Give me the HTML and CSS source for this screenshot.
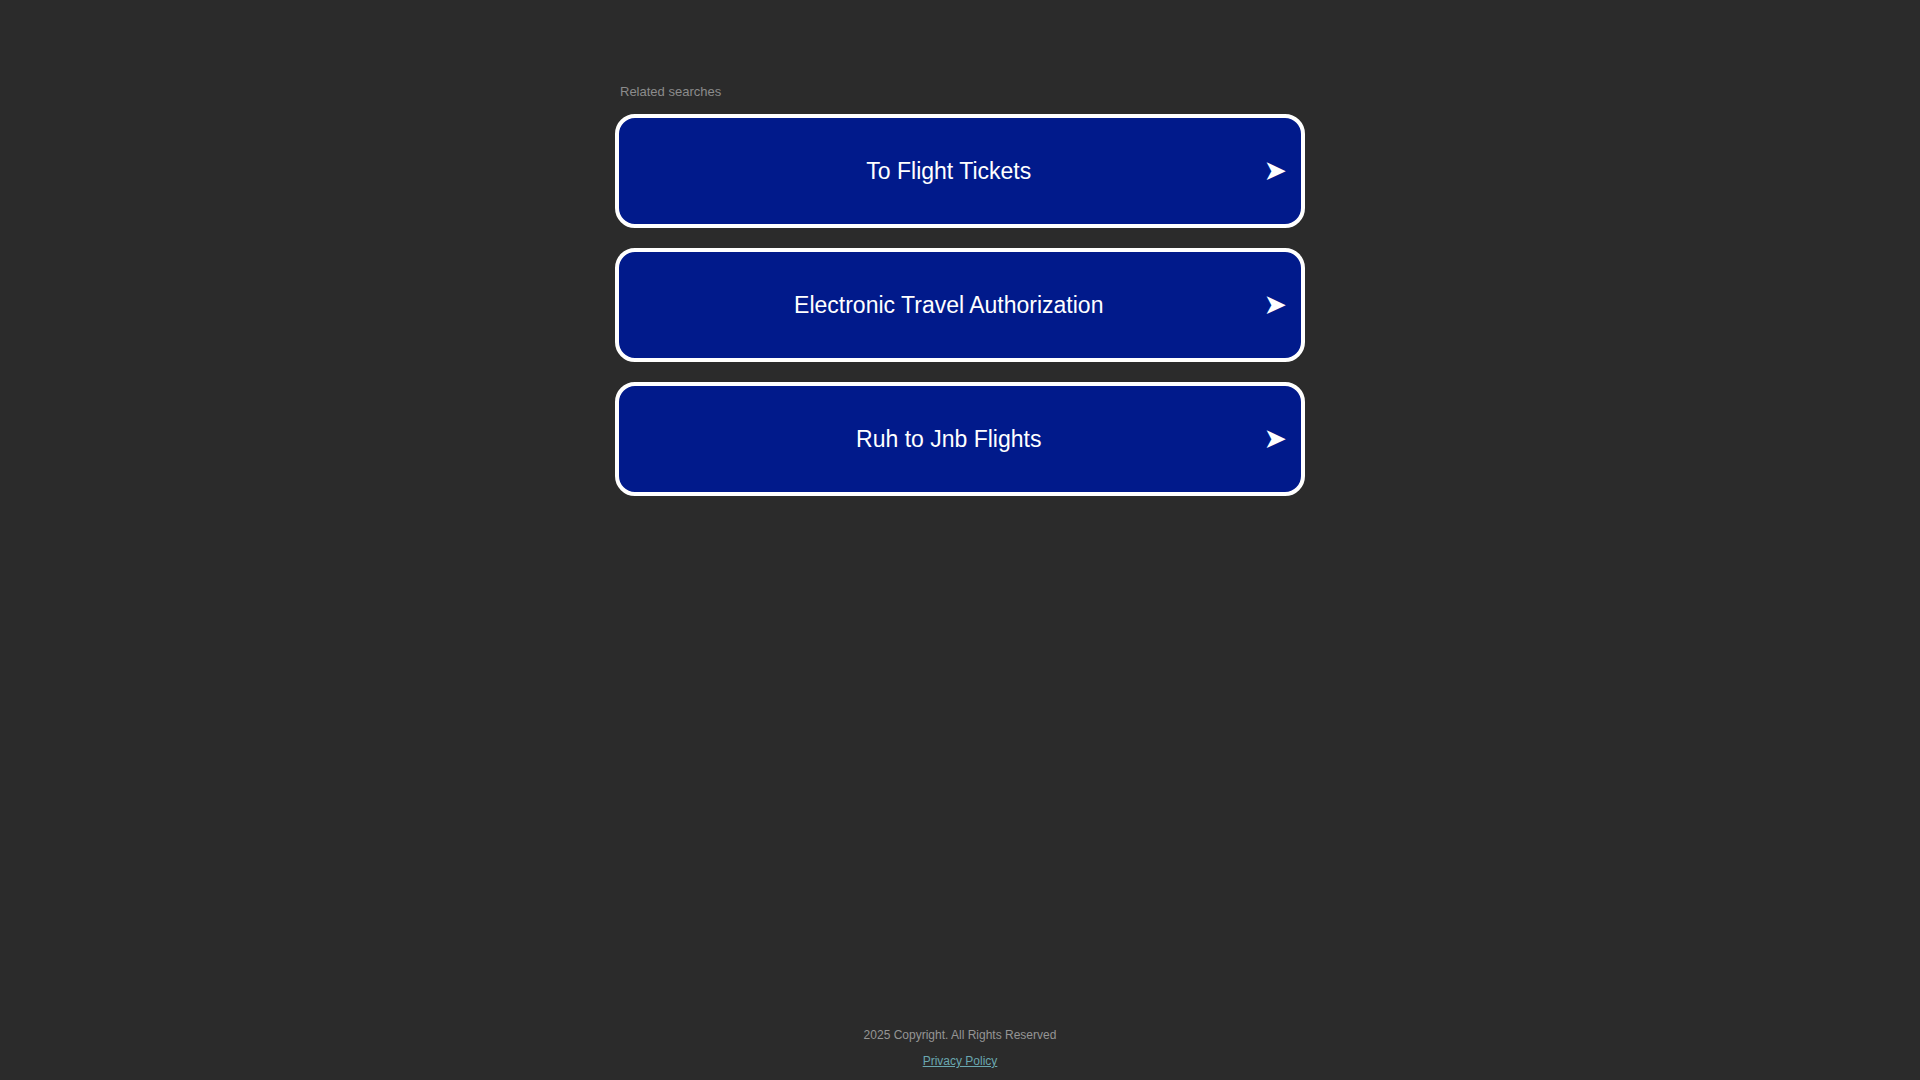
FILE: index.html
```html
<!DOCTYPE html>
<html lang="en">
<head>
<meta charset="utf-8">
<title>Related searches</title>
<link rel="stylesheet" href="styles.css">
</head>
<body>
<div class="page">
  <main class="container">
    <div class="label">Related searches</div>
    <div class="list">
      <a class="item" href="#"><span class="item-text">To Flight Tickets</span><span class="arrow">&#10148;</span></a>
      <a class="item" href="#"><span class="item-text">Electronic Travel Authorization</span><span class="arrow">&#10148;</span></a>
      <a class="item" href="#"><span class="item-text">Ruh to Jnb Flights</span><span class="arrow">&#10148;</span></a>
    </div>
  </main>
  <footer class="footer">
    <div class="copy">2025 Copyright. All Rights Reserved</div>
    <a class="privacy" href="#">Privacy Policy</a>
  </footer>
</div>
</body>
</html>
```

FILE: styles.css
```css
html, body {
  margin: 0;
  padding: 0;
  background: #2b2b2b;
  font-family: "Liberation Sans", Arial, sans-serif;
}
.page {
  min-height: 100vh;
  display: flex;
  flex-direction: column;
  box-sizing: border-box;
}
.container {
  width: 690px;
  margin: 0 auto;
  padding-top: 84px;
  flex: 1;
}
.label {
  font-size: 13px;
  line-height: 15px;
  color: #8c8c8c;
  padding-left: 5px;
  margin-bottom: 15px;
}
.list {
  display: flex;
  flex-direction: column;
  gap: 20px;
}
.item {
  display: flex;
  align-items: center;
  height: 114px;
  box-sizing: border-box;
  border: 4px solid #ffffff;
  border-radius: 20px;
  background: #011a8b;
  color: #ffffff;
  text-decoration: none;
  padding: 0 14px 0 15px;
}
.item-text {
  flex: 1;
  text-align: center;
  font-size: 23px;
}
.arrow {
  font-family: "DejaVu Sans", sans-serif;
  font-size: 28px;
  line-height: 1;
  margin-top: -1px;
}
.footer {
  display: flex;
  flex-direction: column;
  align-items: center;
  padding-bottom: 12px;
  font-size: 12px;
  line-height: 14px;
}
.copy {
  color: #959595;
  margin-bottom: 12px;
}
.privacy {
  color: #6aa7b0;
  text-decoration: underline;
}
```
